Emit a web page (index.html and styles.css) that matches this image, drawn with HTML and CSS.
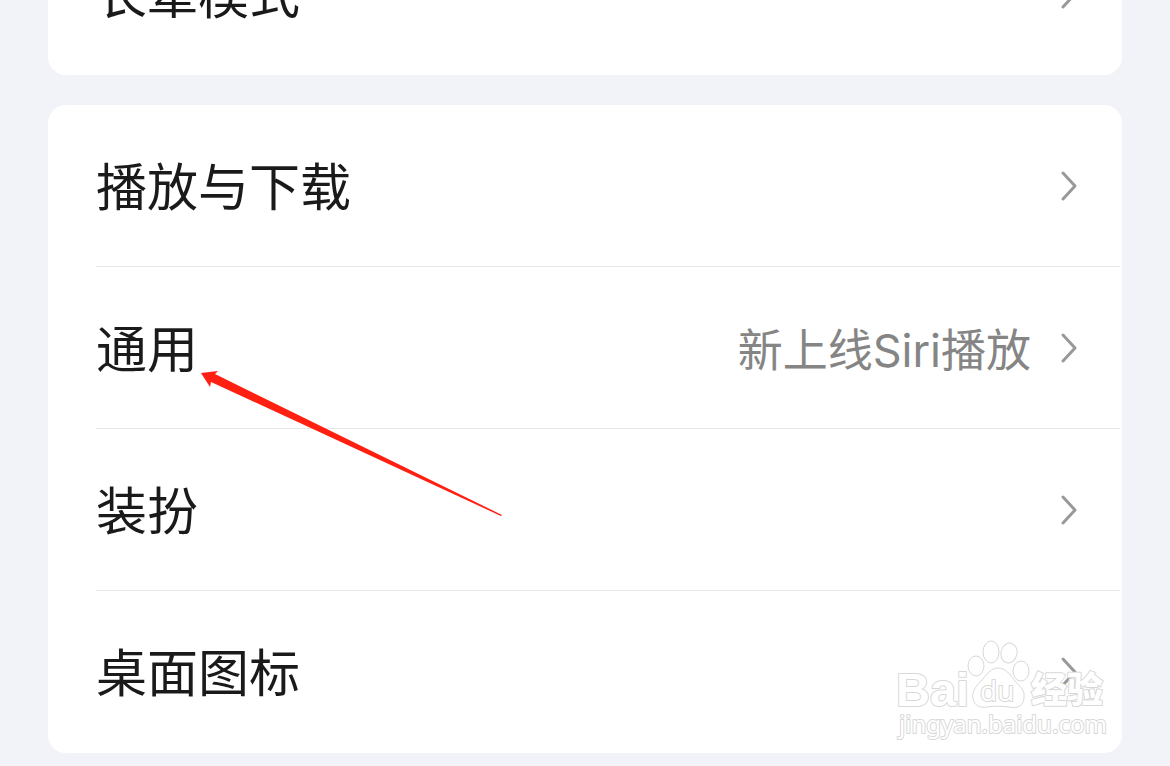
FILE: index.html
```html
<!DOCTYPE html>
<html lang="zh-CN">
<head>
    <meta charset="UTF-8">
    <meta name="viewport" content="width=device-width, initial-scale=1.0">
    <title>设置</title>
    <link rel="stylesheet" href="styles.css">
</head>
<body>
    <svg class="defs" aria-hidden="true">
        <symbol id="chevron" viewBox="0 0 20 32">
            <path d="M4 3 L16 16 L4 29"/>
        </symbol>
    </svg>

    <main class="settings">
        <ul class="card">
            <li class="item">
                <a class="row" href="#elder">
                    <span class="label">长辈模式</span>
                    <svg class="chevron"><use href="#chevron"/></svg>
                </a>
            </li>
        </ul>

        <ul class="card">
            <li class="item">
                <a class="row" href="#download">
                    <span class="label">播放与下载</span>
                    <svg class="chevron"><use href="#chevron"/></svg>
                </a>
            </li>
            <li class="item">
                <a class="row" href="#general">
                    <span class="label">通用</span>
                    <span class="value">新上线Siri播放</span>
                    <svg class="chevron"><use href="#chevron"/></svg>
                </a>
                <svg class="arrow" viewBox="0 0 304 148" aria-hidden="true">
                    <path d="M1 4 L18 2 L15 5 L302 146 L301 147 L11 13 L10 18 Z"/>
                </svg>
            </li>
            <li class="item">
                <a class="row" href="#theme">
                    <span class="label">装扮</span>
                    <svg class="chevron"><use href="#chevron"/></svg>
                </a>
            </li>
            <li class="item">
                <a class="row" href="#icon">
                    <span class="label">桌面图标</span>
                    <svg class="chevron"><use href="#chevron"/></svg>
                </a>
                <svg class="watermark" viewBox="0 0 214 106" aria-hidden="true">
                    <ellipse cx="80" cy="29" rx="8" ry="10"/>
                    <ellipse cx="95" cy="15" rx="8" ry="11"/>
                    <ellipse cx="113" cy="16" rx="8" ry="10" transform="rotate(12 113 16)"/>
                    <ellipse cx="125" cy="34" rx="8" ry="10"/>
                    <text class="wm-logo" x="0" y="69">Bai</text>
                    <path d="M102 31 C94 31 90 39 85 44 C79 50 76 55 77 61 C78 69 84 71 91 70 C98 69 107 69 113 70 C121 72 128 69 128 60 C129 53 124 50 119 44 C114 38 110 31 102 31 Z"/>
                    <text class="wm-du" x="84" y="64">du</text>
                    <text class="wm-cn" x="135" y="66">经验</text>
                    <text class="wm-url" x="3" y="96">jingyan.baidu.com</text>
                </svg>
            </li>
        </ul>
    </main>
</body>
</html>
```

FILE: styles.css
```css
* {
    box-sizing: border-box;
}
body {
    margin: 0;
    background-color: #f2f3f8;
    color: #1a1a1a;
    font-family: "Noto Sans CJK SC", sans-serif;
}
.defs {
    display: none;
}
.settings {
    display: flex;
    flex-direction: column;
    justify-content: flex-end;
    gap: 30px;
    height: 100vh;
    padding: 0 48px 13px;
    overflow: hidden;
}
.card {
    flex-shrink: 0;
    margin: 0;
    padding: 0 2px 0 48px;
    list-style: none;
    background: white;
    border-radius: 18px;
}
.item {
    position: relative;
}
.row {
    display: flex;
    align-items: center;
    height: 162px;
    padding-right: 41px;
    border-bottom: 1px solid #e6e6e6;
    color: inherit;
    text-decoration: none;
}
.item:last-child .row {
    border-bottom-color: transparent;
}
.label {
    flex: 1;
    padding-bottom: 4px;
    font-size: 51px;
    line-height: 72px;
}
.value {
    margin-right: 28px;
    padding-top: 6px;
    color: #858585;
    font-family: Inter, "Noto Sans CJK SC", sans-serif;
    font-size: 45px;
    line-height: 64px;
}
.chevron {
    width: 20px;
    height: 32px;
    fill: none;
    stroke: #999;
    stroke-width: 3;
    stroke-linecap: round;
    stroke-linejoin: round;
}
.arrow {
    position: absolute;
    left: 104px;
    top: 102px;
    z-index: 1;
    width: 304px;
    height: 148px;
    fill: #ff2012;
}
.watermark {
    position: absolute;
    right: 10px;
    bottom: 10px;
    width: 214px;
    height: 106px;
    fill: white;
    stroke: #d8d8d8;
    stroke-width: 1;
}
.watermark text {
    paint-order: stroke;
    stroke-width: 2;
    stroke-linejoin: round;
}
.wm-logo {
    font: bold 47px "Liberation Sans", sans-serif;
}
.wm-du {
    font: 28px "Open Sans", sans-serif;
}
.wm-cn {
    font: 900 36px "Noto Sans CJK SC", sans-serif;
}
.wm-url {
    font: 24px "Noto Sans", sans-serif;
}
```
